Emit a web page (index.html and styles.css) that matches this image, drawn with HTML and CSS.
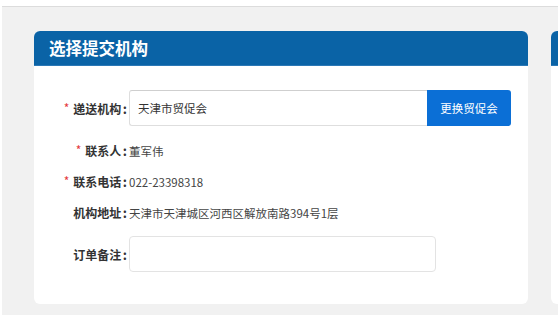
FILE: index.html
```html
<!DOCTYPE html>
<html lang="zh-CN">
<head>
<meta charset="utf-8">
<title>选择提交机构</title>
<link rel="stylesheet" href="styles.css">
</head>
<body>
<div class="page">
  <div class="panels">
    <section class="card">
      <header class="card-head">选择提交机构</header>
      <div class="card-body">
        <div class="row row-input">
          <label class="lbl"><span class="req">*</span>递送机构<span class="colon">:</span></label>
          <div class="field">
            <div class="input">天津市贸促会</div>
            <button class="btn">更换贸促会</button>
          </div>
        </div>
        <div class="row row-text first">
          <label class="lbl"><span class="req">*</span>联系人<span class="colon">:</span></label>
          <div class="val">董军伟</div>
        </div>
        <div class="row row-text">
          <label class="lbl"><span class="req">*</span>联系电话<span class="colon">:</span></label>
          <div class="val">022-23398318</div>
        </div>
        <div class="row row-text">
          <label class="lbl">机构地址<span class="colon">:</span></label>
          <div class="val">天津市天津城区河西区解放南路394号1层</div>
        </div>
        <div class="row row-note">
          <label class="lbl">订单备注<span class="colon">:</span></label>
          <div class="note"></div>
        </div>
      </div>
    </section>
    <section class="card card-side">
      <header class="card-head"></header>
      <div class="card-body"></div>
    </section>
  </div>
</div>
</body>
</html>
```
FILE: styles.css
```css
html, body {
  margin: 0;
  padding: 0;
  background: #ffffff;
  font-family: "Noto Sans CJK SC", "Noto Sans", sans-serif;
  color: #333;
  overflow: hidden;
}
.page {
  margin-top: 6px;
  margin-left: 2px;
  border-top: 1px solid #dcdcdc;
  background: #f1f1f1;
  height: 308px;
  overflow: hidden;
}
.panels {
  display: flex;
  gap: 23px;
  padding: 24px 0 0 32px;
}
.card {
  flex: 0 0 494px;
  height: 273px;
  background: #fff;
  border-radius: 6px;
  overflow: hidden;
  display: flex;
  flex-direction: column;
}
.card-side {
  flex: 0 0 60px;
}
.card-head {
  height: 35px;
  flex: 0 0 35px;
  background: #0a63a6;
  color: #fff;
  font-size: 16.5px;
  font-weight: 700;
  line-height: 35px;
  padding-left: 15px;
  border-bottom: 1px solid #2b78b6;
  box-sizing: border-box;
}
.card-body {
  padding-top: 24px;
}
.row {
  display: grid;
  grid-template-columns: 95px auto;
  align-items: center;
}
.lbl {
  text-align: right;
  font-size: 12px;
  font-weight: 700;
  color: #333;
  white-space: nowrap;
  padding-right: 2px;
}
.colon {
  font-size: 13px;
  margin-left: 1.5px;
}
.req {
  color: #e4393c;
  font-weight: 400;
  font-size: 12px;
  margin-right: 4px;
  position: relative;
  top: -1px;
}
.row-input {
  height: 36px;
}
.field {
  display: flex;
  height: 36px;
}
.input {
  width: 298px;
  box-sizing: border-box;
  border: 1px solid #dedede;
  border-top-color: #cfcfcf;
  border-right: none;
  border-radius: 3px 0 0 3px;
  font-size: 11.5px;
  line-height: 34px;
  padding-left: 8px;
  color: #333;
}
.btn {
  width: 84px;
  height: 36px;
  border: none;
  background: #0b6fd6;
  color: #fff;
  font-family: inherit;
  font-size: 11.5px;
  border-radius: 0 3px 3px 0;
  padding: 0;
}
.row-text {
  height: 31px;
}
.row-text.first {
  margin-top: 9px;
}
.val {
  font-size: 11.5px;
  color: #444;
}
.row-note {
  margin-top: 8px;
  height: 36px;
}
.note {
  width: 307px;
  height: 36px;
  box-sizing: border-box;
  border: 1px solid #e3e3e3;
  border-radius: 4px;
}
```
